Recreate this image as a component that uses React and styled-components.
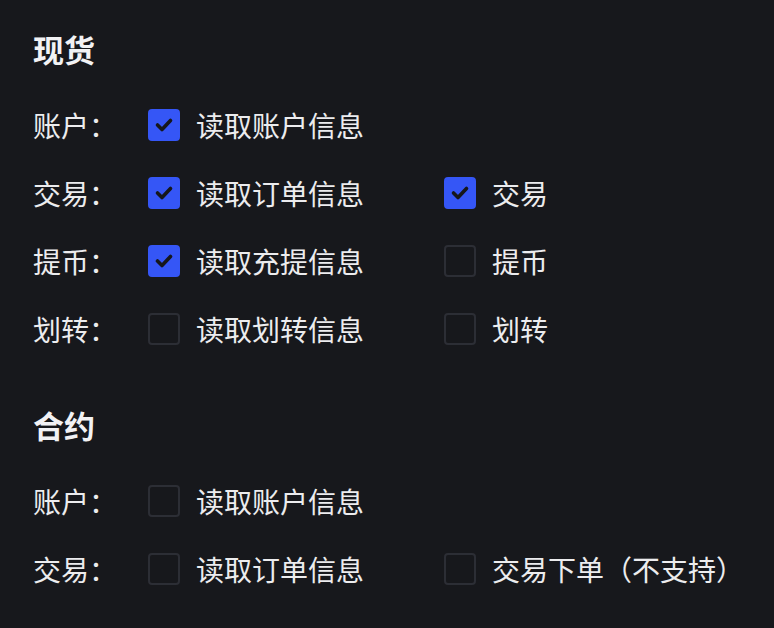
import React from 'react'
import styled, { createGlobalStyle } from 'styled-components'

const GlobalStyle = createGlobalStyle`
  html, body {
    margin: 0;
    padding: 0;
    background-color: #17181c;
  }
  body {
    font-family: "Noto Sans CJK SC", "Noto Sans", sans-serif;
    color: #ececee;
  }
`

const Page = styled.div`
  width: 774px;
  height: 628px;
  box-sizing: border-box;
  padding: 33px 0 0 33px;
  background-color: #17181c;
  overflow: hidden;
`

const Section = styled.section`
  display: flex;
  flex-direction: column;
  & + & {
    margin-top: 46px;
  }
`

const Heading = styled.h2`
  margin: 0 0 26px 0;
  font-size: 31px;
  line-height: 32px;
  font-weight: 700;
  color: #f2f2f4;
`

const Row = styled.div`
  display: grid;
  grid-template-columns: 115px 296px auto;
  align-items: center;
  height: 68px;
`

const Label = styled.span`
  font-size: 28px;
  line-height: 32px;
  color: #ececee;
`

const Option = styled.label`
  display: flex;
  align-items: center;
  gap: 16px;
  font-size: 28px;
  line-height: 32px;
  color: #ececee;
  cursor: pointer;
`

const Box = styled.span`
  display: flex;
  align-items: center;
  justify-content: center;
  flex: none;
  width: 32px;
  height: 32px;
  box-sizing: border-box;
  border-radius: 4px;
  border: 2px solid ${p => (p.checked ? '#3556f6' : '#2c2e35')};
  background-color: ${p => (p.checked ? '#3556f6' : 'transparent')};
`

const Check = () => (
  <svg width='20' height='20' viewBox='0 0 20 20'>
    <path d='M3.5 10 L8 14.5 L16.5 5.5' fill='none' stroke='#16171b' strokeWidth='3.6' strokeLinecap='round' strokeLinejoin='round' />
  </svg>
)

const Checkbox = ({ checked, children }) => (
  <Option>
    <Box checked={checked}>{checked && <Check />}</Box>
    <span>{children}</span>
  </Option>
)

const sections = [
  {
    title: '现货',
    rows: [
      { label: '账户：', items: [['读取账户信息', true]] },
      { label: '交易：', items: [['读取订单信息', true], ['交易', true]] },
      { label: '提币：', items: [['读取充提信息', true], ['提币', false]] },
      { label: '划转：', items: [['读取划转信息', false], ['划转', false]] }
    ]
  },
  {
    title: '合约',
    rows: [
      { label: '账户：', items: [['读取账户信息', false]] },
      { label: '交易：', items: [['读取订单信息', false], ['交易下单（不支持）', false]] }
    ]
  }
]

const App = () => (
  <Page>
    <GlobalStyle />
    {sections.map(section => (
      <Section key={section.title}>
        <Heading>{section.title}</Heading>
        {section.rows.map(row => (
          <Row key={row.label}>
            <Label>{row.label}</Label>
            {row.items.map(([text, checked]) => (
              <Checkbox key={text} checked={checked}>{text}</Checkbox>
            ))}
          </Row>
        ))}
      </Section>
    ))}
  </Page>
)

export default App
